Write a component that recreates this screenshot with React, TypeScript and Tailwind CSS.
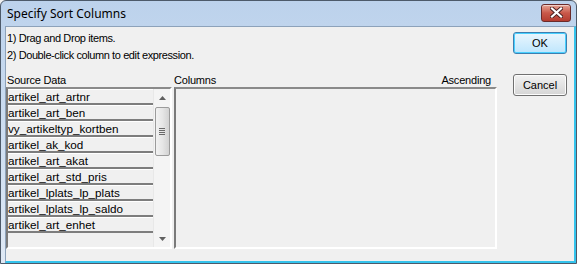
import React from "react";

const items = [
  "artikel_art_artnr",
  "artikel_art_ben",
  "vy_artikeltyp_kortben",
  "artikel_ak_kod",
  "artikel_art_akat",
  "artikel_art_std_pris",
  "artikel_lplats_lp_plats",
  "artikel_lplats_lp_saldo",
  "artikel_art_enhet",
];

const ui = { fontFamily: '"Liberation Sans", Arial, sans-serif' };

export default function App() {
  return (
    <div className="w-[577px] h-[264px] bg-[#f0f0f0] overflow-hidden">
      <div
        className="w-[577px] h-[264px] flex flex-col rounded-t-[6px] border border-[#4d5a6a] bg-gradient-to-b from-[#bcd2ec] to-[#dfe9f5]"
        style={ui}
      >
        {/* Title bar */}
        <div className="h-[25px] flex items-center justify-between pl-[6px] pr-[5px] shrink-0">
          <span
            className="text-[12px] text-black mt-[1px]"
            style={{ fontFamily: '"Noto Sans", "Open Sans", sans-serif' }}
          >
            Specify Sort Columns
          </span>
          <div className="w-[30px] h-[18px] -mt-[2px] rounded-[3px] border border-[#6b2b2b] bg-gradient-to-b from-[#e4a394] via-[#c9584a] to-[#b43c30] flex items-center justify-center shadow-[inset_0_1px_0_rgba(255,255,255,0.5)]">
            <svg width="13" height="11" viewBox="0 0 13 11">
              <path
                d="M2 1.5 L11 9.5 M11 1.5 L2 9.5"
                stroke="#4a2020"
                strokeWidth="4"
                strokeLinecap="square"
              />
              <path
                d="M2 1.5 L11 9.5 M11 1.5 L2 9.5"
                stroke="#ffffff"
                strokeWidth="2.2"
                strokeLinecap="square"
              />
            </svg>
          </div>
        </div>

        {/* Client area */}
        <div className="flex-1 flex ml-[4px] border-l border-t border-[#8da2ba] border-r-2 border-r-[#34c3ec] border-b-2 border-b-[#34c3ec] bg-[#f0f0f0]">
          <div className="flex-1 flex flex-col pt-[4px]">
            <div className="text-[11px] leading-[14px] pl-[1px] tracking-[-0.4px] text-black">
              1) Drag and Drop items.
            </div>
            <div className="mt-[3px] text-[11px] leading-[14px] pl-[1px] tracking-[-0.4px] text-black">
              2) Double-click column to edit expression.
            </div>
            <div className="mt-[12px] flex text-[11px] leading-[13px] text-black tracking-[-0.2px]">
              <div className="w-[168px] pl-[1px]">Source Data</div>
              <div className="flex-1 flex justify-between pr-[10px]">
                <span>Columns</span>
                <span>Ascending</span>
              </div>
            </div>
            <div className="flex gap-[2px] h-[162px]">
              {/* Source list */}
              <div className="w-[166px] h-full flex border-2 border-t-[#8a8a8a] border-l-[#7a7a7a] border-r-[#ffffff] border-b-[#ffffff]">
                <div className="flex-1 flex flex-col">
                  {items.map((t) => (
                    <div
                      key={t}
                      className="h-[16px] shrink-0 border-b-[2px] border-b-[#7d7d7d] border-t border-t-[#ffffff] text-[11.7px] leading-[13px] text-black whitespace-nowrap overflow-hidden"
                    >
                      {t}
                    </div>
                  ))}
                </div>
                {/* Scrollbar */}
                <div className="w-[17px] h-full flex flex-col items-center bg-[#f4f4f4] border-l border-[#e8e8e8]">
                  <div className="h-[17px] w-full flex items-center justify-center">
                    <svg width="7" height="4" viewBox="0 0 7 4">
                      <path d="M3.5 0 L7 4 L0 4 Z" fill="#606060" />
                    </svg>
                  </div>
                  <div className="w-[15px] h-[49px] mt-[1px] rounded-[2px] border border-[#9b9b9b] bg-gradient-to-r from-[#f2f2f2] via-[#e6e6e6] to-[#d2d2d2] flex flex-col items-center justify-center gap-[1px]">
                    <div className="w-[6px] h-[1px] bg-[#6a6a6a]" />
                    <div className="w-[6px] h-[1px] bg-[#6a6a6a]" />
                    <div className="w-[6px] h-[1px] bg-[#6a6a6a]" />
                    <div className="w-[6px] h-[1px] bg-[#6a6a6a]" />
                  </div>
                  <div className="flex-1" />
                  <div className="h-[17px] w-full flex items-center justify-center">
                    <svg width="7" height="4" viewBox="0 0 7 4">
                      <path d="M0 0 L7 0 L3.5 4 Z" fill="#606060" />
                    </svg>
                  </div>
                </div>
              </div>
              {/* Columns box */}
              <div className="w-[323px] h-full border-2 border-t-[#8a8a8a] border-l-[#7a7a7a] border-r-[#ffffff] border-b-[#ffffff] bg-[#f0f0f0]" />
            </div>
          </div>

          {/* Buttons */}
          <div className="w-[54px] mr-[7px] ml-[12px] flex flex-col pt-[5px] gap-[20px]">
            <div className="h-[22px] rounded-[3px] border border-[#3c7fb1] bg-gradient-to-b from-[#eaf6fd] to-[#bee6fd] shadow-[inset_0_0_0_1px_#48d0ff] flex items-center justify-center text-[11px] text-black">
              OK
            </div>
            <div className="h-[22px] rounded-[3px] border border-[#707070] bg-gradient-to-b from-[#f2f2f2] to-[#d5d5d5] shadow-[inset_0_0_0_1px_#fcfcfc] flex items-center justify-center text-[11px] text-black">
              Cancel
            </div>
          </div>
        </div>
      </div>
    </div>
  );
}
